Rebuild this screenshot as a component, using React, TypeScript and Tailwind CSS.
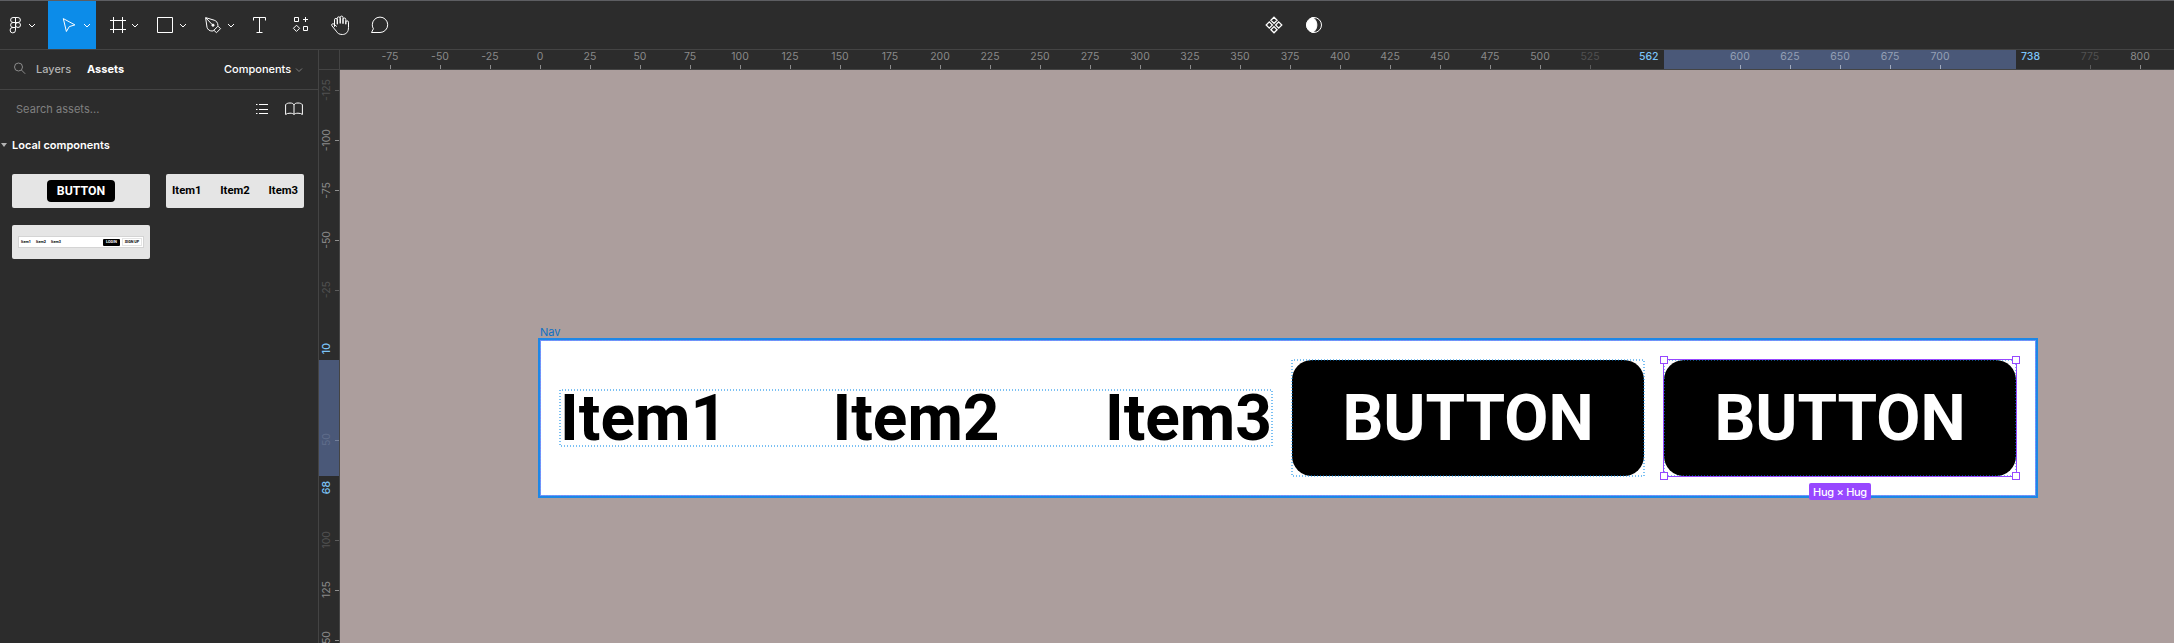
import type { ReactNode } from "react";

type Tone = "normal" | "faded" | "selected" | "dim" | "hidden";

const toneText: Record<Tone, string> = {
  normal: "text-[#8a8a8a]",
  faded: "text-[#515151]",
  selected: "text-[#95a0b6]",
  dim: "text-[#5f6c8a]",
  hidden: "invisible",
};
const toneTick: Record<Tone, string> = {
  normal: "bg-[#8e8e8e]",
  faded: "bg-[#5c5c5c]",
  selected: "bg-[#a3adc0]",
  dim: "bg-[#74809b]",
  hidden: "invisible",
};

const xMarks = Array.from({ length: 36 }, (_, i) => -75 + i * 25);
const yMarks = Array.from({ length: 12 }, (_, i) => -125 + i * 25);

function xTone(v: number): Tone {
  if (v === 550 || v === 575 || v === 725 || v === 750) return "hidden";
  if (v === 525 || v === 775) return "faded";
  if (v > 562 && v < 738) return "selected";
  return "normal";
}

function yTone(v: number): Tone {
  if (v === 0 || v === 25 || v === 75) return "hidden";
  if (v === 50) return "dim";
  if (v === -25 || v === 100 || v === -125) return "faded";
  return "normal";
}

function Tool({ wide, active, children }: { wide?: boolean; active?: boolean; children: ReactNode }) {
  return (
    <button className={`h-12 shrink-0 ${wide ? "w-12" : "w-10"} ${active ? "bg-[#0c8ce9]" : ""}`}>
      <svg
        viewBox={wide ? "0 0 48 48" : "0 0 40 48"}
        className="block h-12 w-full"
        fill="none"
        stroke="#fff"
        strokeWidth="1"
      >
        {children}
      </svg>
    </button>
  );
}

function Toolbar() {
  return (
    <header className="flex h-[50px] shrink-0 border-t border-b border-t-[#5d5e62] border-b-[#444]">
      <Tool wide>
        <path d="M15.5 16.5h-2.4a2.5 2.5 0 0 0 0 5h2.4zM15.5 16.5h2.4a2.5 2.5 0 0 1 0 5h-2.4zM15.5 21.5h-2.4a2.5 2.5 0 0 0 0 5h2.4zM15.5 26.5h-2.4a2.7 2.7 0 1 0 2.4 2.7z" />
        <circle cx="18" cy="24" r="2.5" />
        <path d="M29 23l3 3 3-3" />
      </Tool>
      <Tool wide active>
        <path d="M15.3 17.6l11.6 6.3-5.6 1.7-2.9 4.9z" />
        <path d="M36 23l3 3 3-3" />
      </Tool>
      <Tool wide>
        <path d="M17.5 16v16M26.5 16v16M14 19.5h16M14 28.5h16" />
        <path d="M36 23l3 3 3-3" />
      </Tool>
      <Tool wide>
        <path d="M13.5 16.5h15v15h-15z" />
        <path d="M36 23l3 3 3-3" />
      </Tool>
      <Tool wide>
        <path d="M13.6 16.6l8.600 2.600c2.300.8 3.700 2.600 3.700 5.200l-.3 1.200-4.400 4.300-1.200.1c-2.600 0-4.300-1.400-5-3.700zM14 17l6.200 6.600M26 25.200l2.500 2.500-4 4-2.700-2.500" />
        <circle cx="21" cy="24.200" r="1.100" fill="#fff" />
        <path d="M36 23l3 3 3-3" />
      </Tool>
      <Tool>
        <path d="M13.5 19.5v-3h12v3M19.5 16.5v15M16.5 31.5h6" />
      </Tool>
      <Tool>
        <path d="M14.5 16.5h4v4h-4zM23.5 25.5h4v4h-4zM25.5 16v5M23 18.5h5M16.5 24.2l3.1 3.1-3.1 3.1-3.1-3.1z" />
      </Tool>
      <Tool>
        <path
          strokeLinejoin="round"
          strokeLinecap="round"
          d="M14.5 25.4v-6.600a1.400 1.400 0 0 1 2.800 0v4.200M17.300 22.500v-5.200a1.400 1.400 0 0 1 2.900 0v5M20.200 21.500v-5a1.400 1.400 0 0 1 2.800 0v6M23 22v-3.600a1.400 1.400 0 0 1 2.800 0v4.600M25.800 22.500v-1.300a1.350 1.350 0 0 1 2.700 0v5.300c0 4.500-2.400 7-6.200 7-3.200 0-4.700-1.200-6-3.300l-4.400-5.400c-1-1.500.900-2.700 2.100-1.700l2.500 2.200"
        />
      </Tool>
      <Tool>
        <path d="M11.500 31.500h8.500a7.700 7.700 0 1 0-7.700-7.700c0 1.500.4 2.800 1.100 4z" />
      </Tool>
      <div className="w-[854px] shrink-0" />
      <Tool>
        <g strokeWidth="1.300">
          <path d="M20 16.200l3.100 3.100-3.100 3.100-3.100-3.100zM20 25.600l3.100 3.100-3.100 3.100-3.100-3.100zM15.300 20.900l3.100 3.100-3.100 3.100-3.100-3.100zM24.700 20.900l3.100 3.100-3.100 3.100-3.100-3.100z" />
        </g>
      </Tool>
      <Tool>
        <circle cx="20" cy="24" r="7.500" />
        <path d="M19 16.600a9 9 0 0 1 0 14.800a7.500 7.500 0 0 1 0-14.800z" fill="#fff" />
      </Tool>
    </header>
  );
}

function AssetCard({ children }: { children: ReactNode }) {
  return (
    <div className="flex h-[34px] w-[138px] items-center justify-center rounded-[2px] bg-[#e5e5e5] font-['Roboto',sans-serif] font-bold text-black">
      {children}
    </div>
  );
}

function Sidebar() {
  return (
    <aside className="flex w-[319px] shrink-0 flex-col border-r border-[#444] text-[11px] leading-4">
      <div className="flex h-10 shrink-0 items-center border-b border-[#444] pb-[2px] pl-[13px]">
        <svg viewBox="0 0 13 13" className="h-[13px] w-[13px]" fill="none" stroke="#8c8c8c">
          <circle cx="5.500" cy="5" r="4" />
          <path d="M8.400 8l3.800 3.800" />
        </svg>
        <span className="ml-[10px] w-[51px] font-medium text-[#b3b3b3]">Layers</span>
        <span className="w-[137px] font-bold text-white">Assets</span>
        <span className="font-medium text-white">Components</span>
        <svg viewBox="0 0 8 6" className="mt-[2px] ml-1 h-[6px] w-2" fill="none" stroke="#7d7d7d">
          <path d="M1 1.500l3 3 3-3" />
        </svg>
      </div>
      <div className="flex h-[39px] shrink-0 items-center pb-px">
        <span className="ml-4 w-[240px] pb-px tracking-[0.050px] text-[#808080]">Search assets...</span>
        <svg viewBox="0 0 12 12" className="h-3 w-3" stroke="#fff">
          <path d="M0 1.500h1.500M3 1.500h9M0 6.500h1.500M3 6.500h9M0 10.500h1.500M3 10.500h9" />
        </svg>
        <svg viewBox="0 0 18 14" className="ml-[17px] h-[14px] w-[18px]" fill="none" stroke="#fff">
          <path d="M9 12.500V3.200C8.600 1.600 7.200 1 5 1S1.400 1.600 .6 2.700v9.800C1.600 11.600 3.200 11.200 5 11.200s3.200.4 4 1.300c.8-.9 2.200-1.300 4-1.300s3.400.4 4.400 1.300V2.700C16.600 1.600 15.200 1 13 1s-3.600.6-4 2.200" />
        </svg>
      </div>
      <div className="flex h-8 shrink-0 items-center">
        <svg viewBox="0 0 6 4" className="ml-[1px] h-1 w-[6px]" fill="#b3b3b3">
          <path d="M0 0h6L3 4z" />
        </svg>
        <span className="ml-[5px] font-semibold text-white">Local components</span>
      </div>
      <div className="mt-[13px] ml-3 grid grid-cols-[138px_138px] gap-x-4 gap-y-[17px]">
        <AssetCard>
          <span className="flex h-[22px] w-[68px] items-center justify-center rounded-[4px] bg-black text-[12.300px] text-white">
            BUTTON
          </span>
        </AssetCard>
        <AssetCard>
          <span className="flex w-[126px] justify-between text-[11.300px]">
            <span>Item1</span>
            <span>Item2</span>
            <span>Item3</span>
          </span>
        </AssetCard>
        <AssetCard>
          <div className="flex h-3 w-[126px] items-center border border-[#d4d4d4] bg-white pl-[2px] text-[3.800px] leading-none">
            <span className="w-[15px] shrink-0">Item1</span>
            <span className="w-[15px] shrink-0">Item2</span>
            <span className="w-[52px] shrink-0">Item3</span>
            <span className="flex h-[7px] w-[17px] shrink-0 items-center justify-center rounded-[1px] bg-black text-white">LOGIN</span>
            <span className="ml-[2px] flex h-[8px] w-5 shrink-0 items-center justify-center border border-[#e4e4e4] whitespace-nowrap">SIGN UP</span>
          </div>
        </AssetCard>
      </div>
    </aside>
  );
}

function TopRuler() {
  return (
    <div className="relative flex h-5 shrink-0 overflow-hidden border-b border-[#444] text-[10.500px] leading-3">
      <div className="absolute top-0 left-[1324px] h-5 w-[352px] bg-[#4a5878]" />
      <div className="w-[25px] shrink-0" />
      {xMarks.map((v) => (
        <div key={v} className={`relative flex w-[50px] shrink-0 flex-col items-center justify-between pt-px ${toneText[xTone(v)]}`}>
          <span>{v}</span>
          <span className={`ml-px h-1 w-px ${toneTick[xTone(v)]}`} />
        </div>
      ))}
      <span className="absolute top-px left-[1299px] font-medium text-[#7cc4f8]">562</span>
      <span className="absolute top-px left-[1681px] font-medium text-[#7cc4f8]">738</span>
    </div>
  );
}

function SideRuler() {
  return (
    <div className="flex w-[21px] shrink-0 flex-col border-r border-[#444] text-[10.500px] leading-3">
      <div className="h-5 shrink-0 border-b border-[#444]" />
      <div className="relative flex min-h-0 grow flex-col overflow-hidden">
        <div className="absolute top-[290px] left-0 h-[116px] w-5 bg-[#4a5878]" />
        <div className="-mt-[5px] flex flex-col">
          {yMarks.map((v) => (
            <div key={v} className={`relative flex h-[50px] shrink-0 items-center justify-between pl-[2px] ${toneText[yTone(v)]}`}>
              <span className="rotate-180 [writing-mode:vertical-rl]">{v}</span>
              <span className={`mt-px h-px w-1 ${toneTick[yTone(v)]}`} />
            </div>
          ))}
        </div>
        <span className="absolute top-[273px] left-[2px] rotate-180 font-medium text-[#7cc4f8] [writing-mode:vertical-rl]">10</span>
        <span className="absolute top-[411px] left-[2px] rotate-180 font-medium text-[#7cc4f8] [writing-mode:vertical-rl]">68</span>
      </div>
    </div>
  );
}

function Dots() {
  return (
    <svg className="absolute inset-0 h-full w-full overflow-visible">
      <rect width="100%" height="100%" fill="none" stroke="#0c8ce9" strokeOpacity="0.550" strokeWidth="2" strokeDasharray="1 2" strokeDashoffset="1" shapeRendering="crispEdges" />
    </svg>
  );
}

function Handle({ at }: { at: string }) {
  return <span className={`absolute h-2 w-2 border border-[#9747ff] bg-white ${at}`} />;
}

function CanvasButton({ selected }: { selected?: boolean }) {
  return (
    <div className="relative h-[116px] w-[352px] shrink-0">
      <div className="flex h-full items-center justify-center rounded-[20px] bg-black pt-[2px] text-white">BUTTON</div>
      <Dots />
      {selected && (
        <>
          <div className="absolute -inset-px border border-[#9747ff]" />
          <Handle at="-top-1 -left-1" />
          <Handle at="-top-1 -right-1" />
          <Handle at="-bottom-1 -left-1" />
          <Handle at="-right-1 -bottom-1" />
          <span className="absolute top-[123px] left-[145px] flex h-[17px] w-[62px] items-center justify-center rounded-[2px] bg-[#9747ff] pt-px font-['Inter',sans-serif] text-[11px] leading-4 font-medium tracking-[-0.300px] whitespace-nowrap">
            <span className="text-white">Hug × Hug</span>
          </span>
        </>
      )}
    </div>
  );
}

function Canvas() {
  return (
    <div className="grow overflow-hidden bg-[#ac9e9d] pl-[200px]">
      <div className="mt-[255px] h-[15px] text-[11px] leading-[15px] text-[#0d6fc4]">Nav</div>
      <div className="relative flex h-[156px] w-[1496px] items-center gap-5 bg-white pl-5 font-['Roboto',sans-serif] text-[64px] leading-none font-bold text-black">
        <div className="absolute -inset-[2px] border-[2px] border-[#1d87e6]" />
        <svg className="absolute inset-0 h-full w-full">
          <rect x="0.500" y="0.500" width="1495" height="155" fill="none" stroke="#5fa8f5" />
          <rect x="0.500" y="0.500" width="1495" height="155" fill="none" stroke="#8f6cff" strokeDasharray="1 2" />
        </svg>
        <div className="relative flex h-14 w-[712px] shrink-0 items-center justify-between pt-[2px]">
          <span>Item1</span>
          <span>Item2</span>
          <span>Item3</span>
          <Dots />
        </div>
        <CanvasButton />
        <CanvasButton selected />
      </div>
    </div>
  );
}

export default function App() {
  return (
    <div className="flex h-[643px] w-[2174px] flex-col overflow-hidden bg-[#2c2c2c] font-['Inter',sans-serif]">
      <Toolbar />
      <div className="flex min-h-0 grow">
        <Sidebar />
        <SideRuler />
        <div className="flex min-w-0 grow flex-col">
          <TopRuler />
          <Canvas />
        </div>
      </div>
    </div>
  );
}
